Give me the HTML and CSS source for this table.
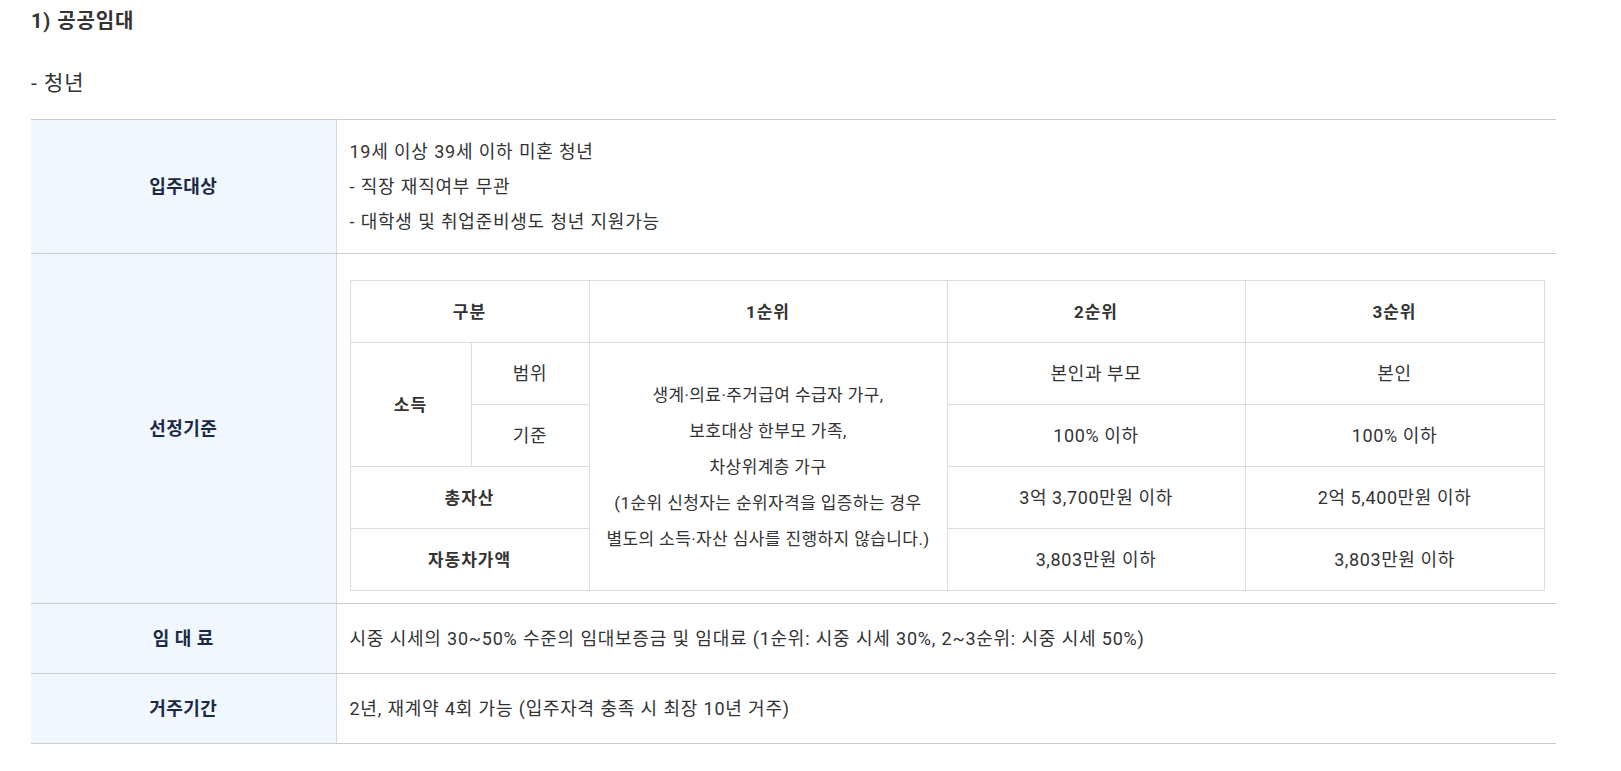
FILE: index.html
```html
<!DOCTYPE html>
<html lang="ko">
<head>
<meta charset="utf-8">
<title>공공임대</title>
<link rel="stylesheet" href="styles.css">
</head>
<body>
<div class="page">
  <h3 class="title">1) 공공임대</h3>
  <p class="subtitle">- 청년</p>
  <table class="info">
    <colgroup><col class="info-head-col"><col></colgroup>
    <tbody>
      <tr class="row-target">
        <th>입주대상</th>
        <td>
          <div>19세 이상 39세 이하 미혼 청년</div>
          <div>- 직장 재직여부 무관</div>
          <div>- 대학생 및 취업준비생도 청년 지원가능</div>
        </td>
      </tr>
      <tr class="row-criteria">
        <th>선정기준</th>
        <td class="criteria-cell">
          <table class="rank">
            <colgroup>
              <col class="c1"><col class="c2"><col class="c3"><col class="c4"><col class="c5">
            </colgroup>
            <tbody>
              <tr>
                <th colspan="2">구분</th>
                <th>1순위</th>
                <th>2순위</th>
                <th>3순위</th>
              </tr>
              <tr>
                <th rowspan="2">소득</th>
                <td>범위</td>
                <td rowspan="4" class="first">생계·의료·주거급여 수급자 가구,<br>보호대상 한부모 가족,<br>차상위계층 가구<br>(1순위 신청자는 순위자격을 입증하는 경우<br>별도의 소득·자산 심사를 진행하지 않습니다.)</td>
                <td>본인과 부모</td>
                <td>본인</td>
              </tr>
              <tr>
                <td>기준</td>
                <td>100% 이하</td>
                <td>100% 이하</td>
              </tr>
              <tr>
                <th colspan="2">총자산</th>
                <td>3억 3,700만원 이하</td>
                <td>2억 5,400만원 이하</td>
              </tr>
              <tr>
                <th colspan="2">자동차가액</th>
                <td>3,803만원 이하</td>
                <td>3,803만원 이하</td>
              </tr>
            </tbody>
          </table>
        </td>
      </tr>
      <tr class="row-single">
        <th>임 대 료</th>
        <td>시중 시세의 30~50% 수준의 임대보증금 및 임대료 (1순위: 시중 시세 30%, 2~3순위: 시중 시세 50%)</td>
      </tr>
      <tr class="row-single">
        <th>거주기간</th>
        <td>2년, 재계약 4회 가능 (입주자격 충족 시 최장 10년 거주)</td>
      </tr>
    </tbody>
  </table>
</div>
</body>
</html>
```

FILE: styles.css
```css
html, body {
  margin: 0;
  padding: 0;
  background: #ffffff;
}

body {
  font-family: Roboto, "Noto Sans CJK KR", sans-serif;
  color: #333333;
}

.page {
  padding: 6px 0 0 31px;
  width: 1525px;
}

.title {
  margin: 0;
  font-size: 20px;
  line-height: 30px;
  font-weight: 700;
  letter-spacing: 0.9px;
  color: #333333;
}

.subtitle {
  margin: 32px 0 0 0;
  font-size: 21px;
  line-height: 30px;
  letter-spacing: 1px;
  color: #333333;
}

.info {
  margin-top: 21px;
  width: 1525px;
  border-collapse: collapse;
  table-layout: fixed;
  border-top: 1px solid #cccccc;
}

.info-head-col {
  width: 305px;
}

.info > tbody > tr > th,
.info > tbody > tr > td {
  border-bottom: 1px solid #cccccc;
  font-size: 18px;
  line-height: 35px;
  vertical-align: middle;
}

.info > tbody > tr > th {
  background: #f0f7ff;
  color: #1b2a44;
  font-weight: 700;
  letter-spacing: 0.5px;
  text-align: center;
  border-right: 1px solid #d3dae3;
  padding: 0;
}

.info > tbody > tr > td {
  text-align: left;
  padding: 14px 13px 14px 13px;
  letter-spacing: 0.75px;
  word-spacing: 0.3px;
  color: #333333;
}

.info > tbody > tr.row-target > td {
  height: 105px;
}

.info > tbody > tr.row-single > th,
.info > tbody > tr.row-single > td {
  height: 69px;
  padding-top: 0;
  padding-bottom: 0;
}

.info > tbody > tr > td.criteria-cell {
  padding: 26px 13px 12px 13px;
}

.rank {
  width: 100%;
  border-collapse: collapse;
  table-layout: fixed;
}

.rank .c1 { width: 121px; }
.rank .c2 { width: 118px; }
.rank .c3 { width: 358px; }
.rank .c4 { width: 298px; }
.rank .c5 { width: 299px; }

.rank th,
.rank td {
  border: 1px solid #dddddd;
  height: 61px;
  padding: 0 6px;
  font-size: 18px;
  line-height: 36px;
  letter-spacing: 0.6px;
  word-spacing: 0;
  text-align: center;
  vertical-align: middle;
  color: #333333;
}

.rank th {
  font-size: 17px;
  font-weight: 700;
  letter-spacing: 1px;
  color: #333333;
  background: #ffffff;
}

.rank td.first {
  font-size: 17px;
  letter-spacing: 0.4px;
}
```
